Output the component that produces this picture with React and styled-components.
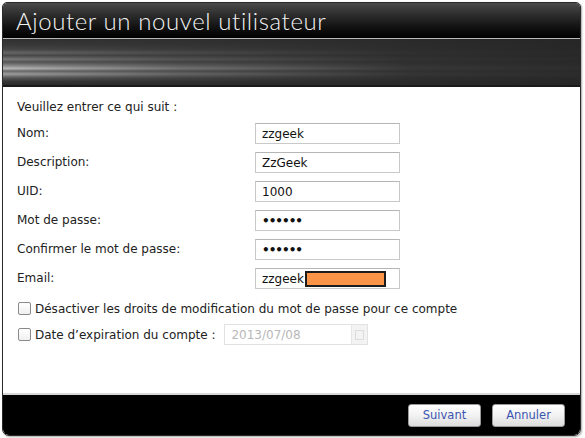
import React from 'react';
import styled, { createGlobalStyle } from 'styled-components';

const Global = createGlobalStyle`
  body {
    margin: 0;
    background: #f4f4f4;
    font-family: "DejaVu Sans", Verdana, sans-serif;
  }
`

const Page = styled.div`
  width: 585px;
  height: 438px;
  padding: 2px 0 0 2px;
  box-sizing: border-box;
  background: #fff;
`

const Window = styled.div`
  width: 579px;
  height: 434px;
  display: flex;
  flex-direction: column;
  border: 1px solid #2a2a2a;
  border-radius: 5px 5px 7px 7px;
  overflow: hidden;
  box-sizing: border-box;
  box-shadow: 1px 1px 2px rgba(0,0,0,0.35);
`

const TitleBar = styled.div`
  height: 35px;
  flex: none;
  display: flex;
  align-items: center;
  padding-left: 13px;
  background: linear-gradient(to bottom, #4a4a4a 0%, #2c2c2c 35%, #111 70%, #000 100%);
  border-bottom: 1px solid #b8b8b8;
`

const Title = styled.h1`
  margin: 0;
  font-family: Lato, "Liberation Sans", sans-serif;
  font-weight: 300;
  font-size: 24px;
  color: #f2f2f2;
  letter-spacing: 0.6px;
`

const Banner = styled.div`
  height: 46px;
  flex: none;
  border-bottom: 2px solid #1a1a1a;
  background:
    linear-gradient(to right, rgba(46,46,46,0) 0%, rgba(46,46,46,0.5) 30%, rgba(42,42,42,0.9) 70%, rgba(38,38,38,0.95) 100%),
    linear-gradient(to bottom,
      #303030 0%, #383838 12%, #444 22%, #666 30%, #4a4a4a 36%,
      #7a7a7a 44%, #555 50%, #8a8a8a 58%, #b8b8b8 64%, #6a6a6a 70%,
      #a0a0a0 76%, #5a5a5a 84%, #363636 92%, #2a2a2a 100%);
`

const Body = styled.div`
  flex: 1;
  background: #fff;
  padding: 10px 0 0 14px;
  border-bottom: 2px solid #d8d8d8;
  font-size: 12px;
  color: #222;
`

const Intro = styled.div`
  height: 20px;
  line-height: 20px;
  margin-bottom: 6px;
`

const Form = styled.div`
  display: grid;
  grid-template-columns: 238px 145px;
  grid-auto-rows: 21px;
  row-gap: 8px;
`

const Label = styled.div`
  line-height: 21px;
`

const Field = styled.div`
  border: 1px solid #c9c9c9;
  border-top-color: #b5b5b5;
  box-sizing: border-box;
  display: flex;
  align-items: center;
  padding-left: 6px;
  font-size: 12px;
  color: #111;
  background: #fff;
  font-weight: ${p => (p.$dots ? 'bold' : 'normal')};
  letter-spacing: ${p => (p.$dots ? '-1px' : '0')};
`

const Masked = styled.span`
  display: inline-block;
  width: 77px;
  height: 12px;
  background: #fb9446;
  border: 2px solid #1c1c1c;
  margin-left: 1px;
`

const CheckRow = styled.label`
  display: flex;
  align-items: center;
  height: 21px;
  margin-top: ${p => p.$top}px;
  padding-left: 1px;
`

const Box = styled.span`
  width: 11px;
  height: 11px;
  border: 1px solid #8a8a8a;
  border-radius: 2px;
  background: linear-gradient(#fff, #f0f0f0);
  margin-right: 4px;
  flex: none;
`

const DateField = styled.div`
  width: 144px;
  height: 21px;
  margin-left: 9px;
  box-sizing: border-box;
  border: 1px solid #e2e2e2;
  display: flex;
  align-items: center;
  padding-left: 6px;
  color: #b8b8b8;
  font-size: 12px;
`

const DateButton = styled.span`
  margin-left: auto;
  width: 15px;
  height: 19px;
  background: #f3f3f3;
  border-left: 1px solid #e6e6e6;
  display: flex;
  align-items: center;
  justify-content: center;
  &::after {
    content: '';
    width: 7px;
    height: 8px;
    border: 1px solid #dcdcdc;
  }
`

const Footer = styled.div`
  height: 40px;
  flex: none;
  background: #000;
  display: flex;
  align-items: center;
  justify-content: flex-end;
  gap: 11px;
  padding-right: 15px;
`

const Button = styled.button`
  width: ${p => p.$w}px;
  height: 23px;
  border: 1px solid #9a9a9a;
  border-radius: 3px;
  background: linear-gradient(to bottom, #ffffff 0%, #f2f2f2 50%, #dcdcdc 100%);
  color: #3a55b0;
  font-family: "DejaVu Sans", Verdana, sans-serif;
  font-size: 11.5px;
  padding: 0;
`

const fields = [
  { label: 'Nom:', value: 'zzgeek' },
  { label: 'Description:', value: 'ZzGeek' },
  { label: 'UID:', value: '1000' },
  { label: 'Mot de passe:', value: '••••••', dots: true },
  { label: 'Confirmer le mot de passe:', value: '••••••', dots: true },
]

const App = () => {
  return (
    <Page>
      <Global />
      <Window>
        <TitleBar>
          <Title>Ajouter un nouvel utilisateur</Title>
        </TitleBar>
        <Banner />
        <Body>
          <Intro>Veuillez entrer ce qui suit :</Intro>
          <Form>
            {fields.map(f => (
              <React.Fragment key={f.label}>
                <Label>{f.label}</Label>
                <Field $dots={f.dots}>{f.value}</Field>
              </React.Fragment>
            ))}
            <Label>Email:</Label>
            <Field>zzgeek<Masked /></Field>
          </Form>
          <CheckRow $top={9}>
            <Box />
            Désactiver les droits de modification du mot de passe pour ce compte
          </CheckRow>
          <CheckRow $top={5}>
            <Box />
            Date d’expiration du compte :
            <DateField>
              2013/07/08
              <DateButton />
            </DateField>
          </CheckRow>
        </Body>
        <Footer>
          <Button $w={73}>Suivant</Button>
          <Button $w={73}>Annuler</Button>
        </Footer>
      </Window>
    </Page>
  )
}

export default App;
